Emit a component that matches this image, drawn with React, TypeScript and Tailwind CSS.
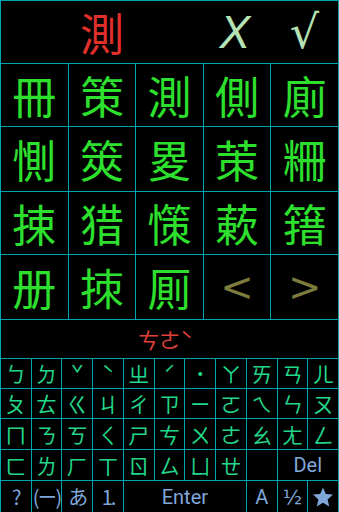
import React from "react";

const cjk = "font-['Noto_Sans_CJK_TC','Noto_Sans_CJK_SC',sans-serif]";

const rows = [
  ["冊", "策", "測", "側", "廁"],
  ["惻", "筴", "畟", "茦", "粣"],
  ["捒", "猎", "憡", "蔌", "簎"],
  ["册", "拺", "厠"],
];

const keys = [
  ["ㄅ", "ㄉ", "ˇ", "ˋ", "ㄓ", "ˊ", "˙", "ㄚ", "ㄞ", "ㄢ", "ㄦ"],
  ["ㄆ", "ㄊ", "ㄍ", "ㄐ", "ㄔ", "ㄗ", "ㄧ", "ㄛ", "ㄟ", "ㄣ", "ㄡ"],
  ["ㄇ", "ㄋ", "ㄎ", "ㄑ", "ㄕ", "ㄘ", "ㄨ", "ㄜ", "ㄠ", "ㄤ", "ㄥ"],
];

const rowHeights = ["h-[62px]", "h-[64px]", "h-[62px]", "h-[64px]"];
const keyHeights = ["h-[29px]", "h-[29px]", "h-[30px]"];

export default function App() {
  return (
    <div className={`w-[339px] h-[512px] bg-[#00a4ac] pt-px px-px flex flex-col gap-px ${cjk}`}>
      <div className="h-[62px] bg-black grid grid-cols-5 items-center text-center">
        <span />
        <span className="text-[44px] leading-none text-[#e0302c]">測</span>
        <span />
        <span className="text-[46px] leading-none italic text-[#b5e3b5] font-['Liberation_Sans',sans-serif] -ml-1">X</span>
        <span className="text-[46px] leading-none text-[#b5e3b5] font-['DejaVu_Sans',sans-serif]">√</span>
      </div>

      {rows.map((r, i) => (
        <div key={i} className="grid grid-cols-5 gap-px">
          {r.map((c, j) => (
            <div key={j} className={`${rowHeights[i]} bg-black flex items-center justify-center text-[44px] leading-none text-[#2ee02e]`}>
              {c}
            </div>
          ))}
          {i === 3 && (
            <>
              <div className="h-[64px] bg-black flex items-center justify-center text-[40px] leading-none text-[#7c7a3c] font-['DejaVu_Sans',sans-serif]">
                &lt;
              </div>
              <div className="h-[64px] bg-black flex items-center justify-center text-[40px] leading-none text-[#7c7a3c] font-['DejaVu_Sans',sans-serif]">
                &gt;
              </div>
            </>
          )}
        </div>
      ))}

      <div className="h-[38px] bg-black flex items-center justify-center text-[21px] leading-none text-[#e0403a] pr-2">
        ㄘㄜˋ
      </div>

      {keys.map((r, i) => (
        <div key={i} className="grid grid-cols-11 gap-px">
          {r.map((k, j) => (
            <div key={j} className={`${keyHeights[i]} bg-black flex items-center justify-center text-[21px] leading-none text-[#22d68a]`}>
              {k}
            </div>
          ))}
        </div>
      ))}

      <div className="grid grid-cols-11 gap-px">
        {["ㄈ", "ㄌ", "ㄏ", "ㄒ", "ㄖ", "ㄙ", "ㄩ", "ㄝ", ""].map((k, j) => (
          <div key={j} className="h-[30px] bg-black flex items-center justify-center text-[21px] leading-none text-[#22d68a]">
            {k}
          </div>
        ))}
        <div className="col-span-2 h-[30px] bg-black flex items-center justify-center text-[20px] leading-none text-[#7fa7d8] font-['Roboto',sans-serif]">
          Del
        </div>
      </div>

      <div className="grid grid-cols-11 gap-px flex-1">
        {["?", "(ㄧ)", "あ", "1."].map((k, j) => (
          <div key={j} className="bg-black flex items-center justify-center text-[20px] leading-none text-[#7fa7d8] tracking-[-2px]">
            {k}
          </div>
        ))}
        <div className="col-span-4 bg-black flex items-center justify-center text-[20px] leading-none text-[#7fa7d8] font-['Roboto',sans-serif]">
          Enter
        </div>
        <div className="bg-black flex items-center justify-center text-[20px] leading-none text-[#7fa7d8] font-['Roboto',sans-serif]">
          A
        </div>
        <div className="bg-black flex items-center justify-center text-[20px] leading-none text-[#7fa7d8] font-['DejaVu_Sans',sans-serif]">
          ½
        </div>
        <div className="bg-black flex items-center justify-center text-[#7fa7d8]">
          <svg width="22" height="22" viewBox="0 0 24 24" fill="currentColor">
            <path d="M12 1.5l3.1 7.2 7.8.7-5.9 5.2 1.8 7.7L12 18.2l-6.8 4.1 1.8-7.7L1.1 9.4l7.8-.7z" />
          </svg>
        </div>
      </div>
    </div>
  );
}
